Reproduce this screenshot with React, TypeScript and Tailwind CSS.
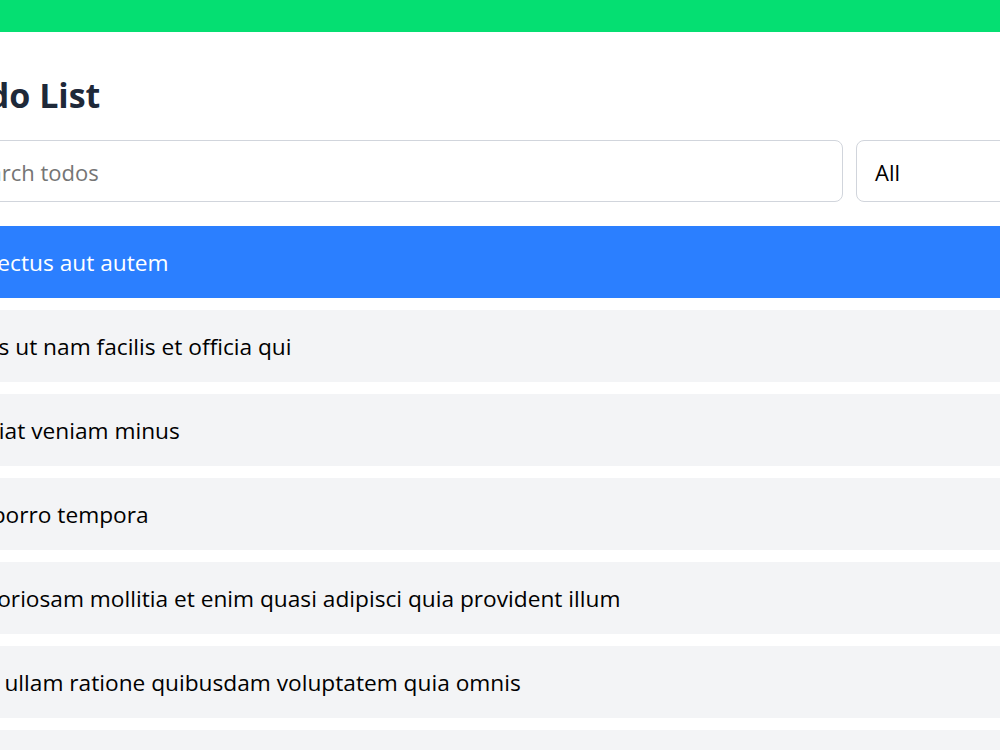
import React from "react";

const todos = [
  "delectus aut autem",
  "quis ut nam facilis et officia qui",
  "fugiat veniam minus",
  "et porro tempora",
  "laboriosam mollitia et enim quasi adipisci quia provident illum",
  "qui ullam ratione quibusdam voluptatem quia omnis",
  "illo expedita consequatur quia in",
];

export default function App() {
  return (
    <div className="w-[1000px] h-[750px] overflow-hidden bg-white font-['Open_Sans',sans-serif]">
      <div className="h-8 bg-green-400" />
      <div className="-ml-[56px] w-[1400px] pt-[40px]">
        <h1 className="text-[34px] leading-[46px] font-bold text-gray-800 pl-[3px]">Todo List</h1>
        <div className="mt-[22px] flex gap-[13px]">
          <input
            placeholder="Search todos"
            className="shrink-0 w-[899px] h-[62px] rounded-lg border border-gray-300 px-[20px] pt-[2px] text-[22px] placeholder:text-[#757575] outline-none"
          />
          <div className="shrink-0 w-[300px] h-[62px] rounded-lg border border-gray-300 px-[18px] pt-[2px] flex items-center text-[22px] text-black">
            All
          </div>
        </div>
        <ul className="mt-[24px] flex flex-col gap-[12px]">
          {todos.map((t, i) => (
            <li
              key={t}
              className={
                i === 0
                  ? "h-[72px] flex items-center px-[21px] pt-[3px] text-[22.7px] bg-blue-500 text-white"
                  : "h-[72px] flex items-center px-[21px] pt-[3px] text-[22.7px] bg-gray-100 text-black"
              }
            >
              {t}
            </li>
          ))}
        </ul>
      </div>
    </div>
  );
}
